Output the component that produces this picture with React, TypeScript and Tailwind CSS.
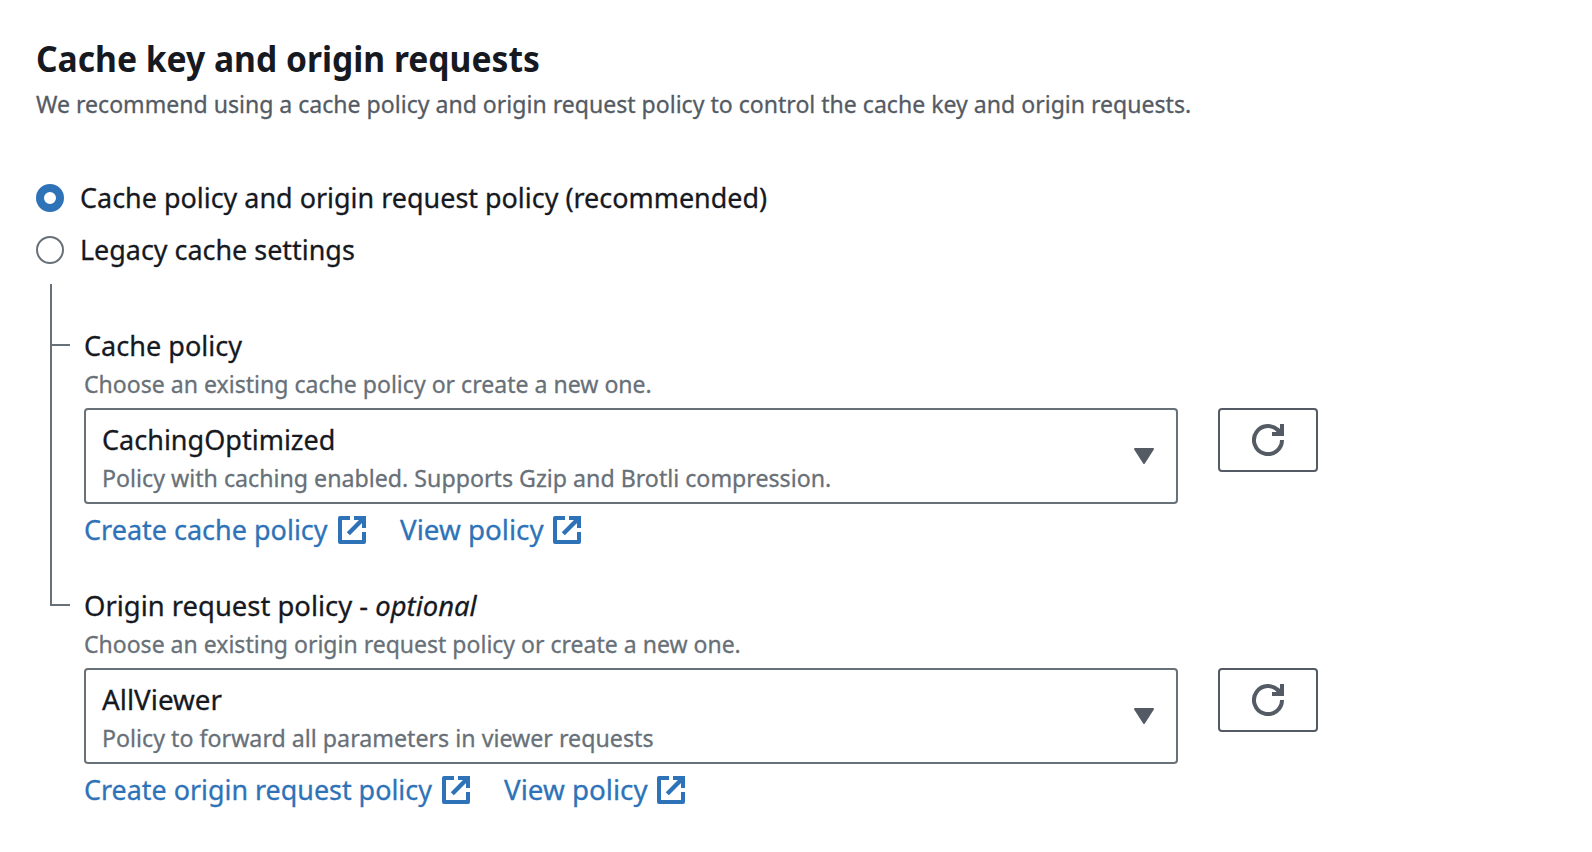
import type { ReactNode } from 'react';

function ExternalIcon() {
  return (
    <svg className="mt-[8px] h-[28px] w-[28px] shrink-0" viewBox="0 0 28 28" fill="none" stroke="#2e73b8" strokeWidth="4">
      <path d="M12 2H2V26H26V16" strokeLinejoin="round" />
      <path d="M16 2H26V12" />
      <path d="M26 2L10.3 17.7" strokeWidth="4.4" />
    </svg>
  );
}

function PolicyLink({ className, children }: { className: string; children: ReactNode }) {
  return (
    <a href="#" className="flex items-start text-[28px] leading-[42px] text-[#2e73b8] [-webkit-text-stroke:0.3px_#2e73b8]">
      <span className={className}>{children}</span>
      <ExternalIcon />
    </a>
  );
}

function RefreshButton() {
  return (
    <button
      type="button"
      aria-label="Refresh"
      className="ml-10 flex h-16 w-[100px] items-center justify-center rounded-[4px] border-2 border-[#545b64]"
    >
      <svg className="h-8 w-8" viewBox="0 0 32 32" fill="none" stroke="#545b64" strokeWidth="4">
        <path d="M30 16A14 14 0 1 1 27 7.4" />
        <path d="M30 0V10H20" />
        <path d="M25 5L30 10" />
      </svg>
    </button>
  );
}

interface FieldProps {
  label: ReactNode;
  hint: ReactNode;
  value: ReactNode;
  detail: ReactNode;
  links: ReactNode;
}

function PolicyField({ label, hint, value, detail, links }: FieldProps) {
  return (
    <div className="h-[260px]">
      <div className="h-10 text-[28px] leading-[42px] [-webkit-text-stroke:0.3px_#16191f]">{label}</div>
      <div className="h-10 text-[24px] leading-10 text-[#687078] [-webkit-text-stroke:0.3px_#687078]">{hint}</div>
      <div className="mt-1 flex items-start">
        <div className="flex h-24 w-[1094px] items-center justify-between rounded-[4px] border-2 border-[#687078] pr-[22px] pl-4">
          <div className="h-full pt-[9px]">
            <div className="h-10 text-[28px] leading-10 [-webkit-text-stroke:0.3px_#16191f]">{value}</div>
            <div className="text-[24px] leading-[38px] text-[#687078] [-webkit-text-stroke:0.3px_#687078]">{detail}</div>
          </div>
          <svg className="h-4 w-5" viewBox="0 0 20 16" fill="#545b64" stroke="#545b64" strokeWidth="2" strokeLinejoin="round">
            <path d="M1 1H19L10 15Z" />
          </svg>
        </div>
        <RefreshButton />
      </div>
      <div className="mt-1 flex gap-[34px]">{links}</div>
    </div>
  );
}

export default function App() {
  return (
    <main className="h-[852px] w-[1592px] overflow-hidden bg-white pt-[37px] pl-9 font-['Noto_Sans','Open_Sans',sans-serif] text-[#16191f]">
      <h1 className="origin-left scale-x-[0.934] text-[36px] leading-[44px] font-bold">Cache key and origin requests</h1>
      <p className="mt-[5px] origin-left scale-x-[0.961] text-[24px] leading-9 text-[#545b64] [-webkit-text-stroke:0.3px_#545b64]">
        We recommend using a cache policy and origin request policy to control the cache key and origin requests.
      </p>

      <div className="mt-[62px] flex flex-col gap-6 text-[28px] leading-[26px] [-webkit-text-stroke:0.3px_#16191f]">
        <div className="flex h-7 items-start gap-4">
          <span className="h-7 w-7 rounded-full border-8 border-[#2e73b8]" />
          <span className="origin-left scale-x-[0.962]">Cache policy and origin request policy (recommended)</span>
        </div>
        <div className="flex h-7 items-start gap-4">
          <span className="h-7 w-7 rounded-full border-2 border-[#687078]" />
          <span className="origin-left scale-x-[0.961]">Legacy cache settings</span>
        </div>
      </div>

      <div className="mt-5 ml-[14px] flex">
        <div className="h-[322px] w-5 border-b-2 border-l-2 border-[#687078] pt-[60px]">
          <div className="h-[2px] bg-[#687078]" />
        </div>
        <div className="ml-[14px] pt-10">
          <PolicyField
            label={<span className="inline-block origin-left scale-x-[0.966]">Cache policy</span>}
            hint={<span className="inline-block origin-left scale-x-[0.961]">Choose an existing cache policy or create a new one.</span>}
            value={<span className="inline-block origin-left scale-x-[0.965]">CachingOptimized</span>}
            detail={<span className="inline-block origin-left scale-x-[0.966]">Policy with caching enabled. Supports Gzip and Brotli compression.</span>}
            links={
              <>
                <PolicyLink className="w-[254px] origin-left scale-x-[0.964] whitespace-nowrap">Create cache policy</PolicyLink>
                <PolicyLink className="w-[153px] origin-left scale-x-[0.991] whitespace-nowrap">View policy</PolicyLink>
              </>
            }
          />
          <PolicyField
            label={
              <span className="inline-block origin-left scale-x-[0.979]">
                Origin request policy - <em>optional</em>
              </span>
            }
            hint={<span className="inline-block origin-left scale-x-[0.959]">Choose an existing origin request policy or create a new one.</span>}
            value={<span className="inline-block origin-left scale-x-[0.992]">AllViewer</span>}
            detail={<span className="inline-block origin-left scale-x-[0.967]">Policy to forward all parameters in viewer requests</span>}
            links={
              <>
                <PolicyLink className="w-[358px] origin-left scale-x-[0.96] whitespace-nowrap">Create origin request policy</PolicyLink>
                <PolicyLink className="w-[153px] origin-left scale-x-[0.991] whitespace-nowrap">View policy</PolicyLink>
              </>
            }
          />
        </div>
      </div>
    </main>
  );
}
